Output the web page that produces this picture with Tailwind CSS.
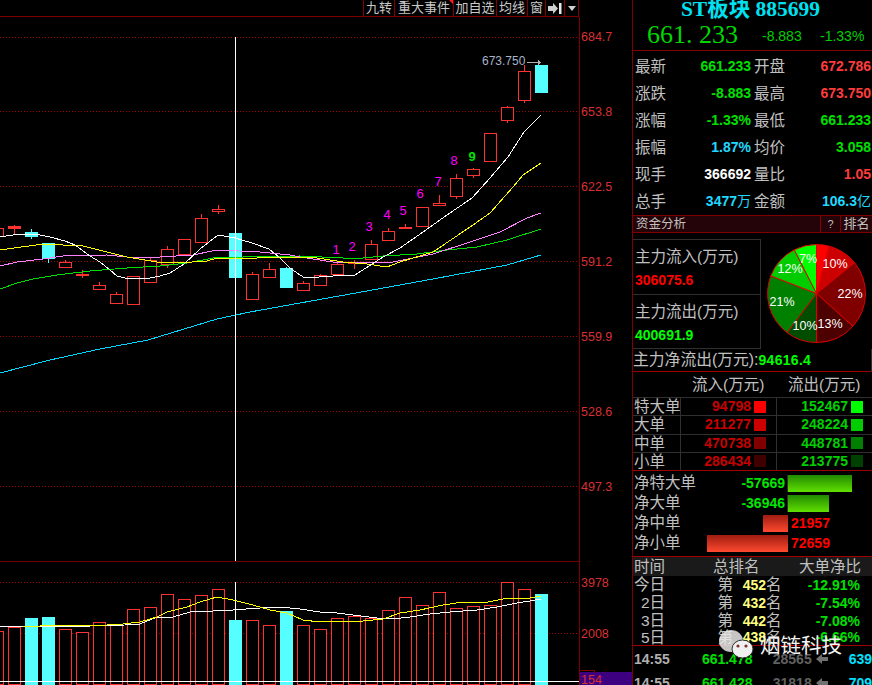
<!DOCTYPE html>
<html lang="zh">
<head>
  <meta charset="UTF-8">
  <title>ST板块 885699</title>
  <script src="https://cdn.jsdelivr.net/npm/@tailwindcss/browser@4"></script>
</head>
<body class="bg-black text-[#c0c0c0] w-[872px] h-[685px] overflow-hidden flex relative [font-family:'Liberation_Sans','Noto_Sans_CJK_SC',sans-serif]">

  <!-- chart column -->
  <div class="w-[632px] h-[685px] shrink-0 flex flex-col">
    <div class="h-[17px] w-[579px] flex justify-end border-b border-[#800000] text-[13px] leading-[16px] text-[#c8c8c8] shrink-0">
      <div class="w-[31px] text-center border-l border-[#800000]">九转</div>
      <div class="w-[59px] text-center border-l border-[#800000] relative">重大事件
        <div class="absolute right-0 top-0 w-0 h-0 border-l-[4px] border-l-transparent border-t-[4px] border-t-[#ff2020]"></div>
      </div>
      <div class="w-[43px] text-center border-l border-[#800000]">加自选</div>
      <div class="w-[31px] text-center border-l border-[#800000]">均线</div>
      <div class="w-[18px] text-center border-l border-[#800000]">窗</div>
      <div class="w-[19px] border-l border-[#800000] flex items-center justify-center">
        <svg width="14" height="11" viewBox="0 0 14 11"><path d="M0 3h5V0l5 5.5-5 5.5V8H0z" fill="#d0d0d0"/><path d="M11 0h2.5v11H11z" fill="#e8e8e8"/></svg>
      </div>
      <div class="w-[15px] border-x border-[#800000] flex items-center justify-center">
        <svg width="8" height="5" viewBox="0 0 8 5"><path d="M0 0h8L4 5z" fill="#d0d0d0"/></svg>
      </div>
    </div>
    <svg id="chart" width="632" height="668" viewBox="0 17 632 668" shape-rendering="crispEdges" class="block"></svg>
  </div>

  <!-- quote panel -->
  <div class="w-[240px] h-[685px] shrink-0 flex flex-col border-l border-[#800000] overflow-hidden font-bold text-[14px]">
    <div class="h-[19px] shrink-0 pr-[4px] text-center text-[21.5px] leading-[19px] text-[#00e0f0] [font-family:'Liberation_Serif','Noto_Sans_CJK_SC',serif]">ST板块 885699</div>
    <div class="h-[32px] flex items-center border-b border-[#800000] shrink-0">
      <div class="w-[129px] pl-[14px] pt-px text-[26px] leading-[32px] font-normal text-[#00d800] [font-family:'Liberation_Serif',serif]">661. 233</div>
      <div class="w-[58px] text-[14px] font-normal text-[#00d000] pt-1">-8.883</div>
      <div class="text-[14px] font-normal text-[#00d000] pt-1">-1.33%</div>
    </div>
    <div class="h-[164px] pt-[2px] grid grid-cols-[118px_120px] grid-rows-6 shrink-0">
      <div class="flex justify-between items-center pl-[2px]"><span class="font-normal text-[15.5px]">最新</span><span class="text-[#00e000]">661.233</span></div>
      <div class="flex justify-between items-center pl-[3px]"><span class="font-normal text-[15.5px]">开盘</span><span class="text-[#ff3c3c]">672.786</span></div>
      <div class="flex justify-between items-center pl-[2px]"><span class="font-normal text-[15.5px]">涨跌</span><span class="text-[#00e000]">-8.883</span></div>
      <div class="flex justify-between items-center pl-[3px]"><span class="font-normal text-[15.5px]">最高</span><span class="text-[#ff3c3c]">673.750</span></div>
      <div class="flex justify-between items-center pl-[2px]"><span class="font-normal text-[15.5px]">涨幅</span><span class="text-[#00e000]">-1.33%</span></div>
      <div class="flex justify-between items-center pl-[3px]"><span class="font-normal text-[15.5px]">最低</span><span class="text-[#00e000]">661.233</span></div>
      <div class="flex justify-between items-center pl-[2px]"><span class="font-normal text-[15.5px]">振幅</span><span class="text-[#20d8ff]">1.87%</span></div>
      <div class="flex justify-between items-center pl-[3px]"><span class="font-normal text-[15.5px]">均价</span><span class="text-[#00e000]">3.058</span></div>
      <div class="flex justify-between items-center pl-[2px]"><span class="font-normal text-[15.5px]">现手</span><span class="text-white">366692</span></div>
      <div class="flex justify-between items-center pl-[3px]"><span class="font-normal text-[15.5px]">量比</span><span class="text-[#ff3c3c]">1.05</span></div>
      <div class="flex justify-between items-center pl-[2px]"><span class="font-normal text-[15.5px]">总手</span><span class="text-[#20d8ff]">3477<span class="font-normal">万</span></span></div>
      <div class="flex justify-between items-center pl-[3px]"><span class="font-normal text-[15.5px]">金额</span><span class="text-[#20d8ff]">106.3<span class="font-normal">亿</span></span></div>
    </div>
    <div class="h-[18px] shrink-0 flex bg-[#240408] border-y border-[#800000] text-[12.5px] leading-[16px] font-normal">
      <div class="w-[187px] pl-[3px]">资金分析</div>
      <div class="w-[20px] text-center text-[11px] border-l border-[#800000]">?</div>
      <div class="flex-1 text-center text-[13px] border-l border-[#800000]">排名</div>
    </div>
    <div class="h-[6px] shrink-0"></div>

    <div class="h-[110px] shrink-0 flex">
      <div class="w-[128px] border-y border-r border-[#303030] flex flex-col">
        <div class="h-[55px] border-b border-[#303030] pl-[2px] pt-[6px]">
          <div class="text-[15.5px] leading-[22px] font-normal whitespace-nowrap">主力流入(万元)</div>
          <div class="text-[#ff0000] leading-[22px] mt-px">306075.6</div>
        </div>
        <div class="flex-1 pl-[2px] pt-[6px]">
          <div class="text-[15.5px] leading-[22px] font-normal whitespace-nowrap">主力流出(万元)</div>
          <div class="text-[#00ff00] leading-[22px] mt-px">400691.9</div>
        </div>
      </div>
      <div class="flex-1 relative">
        <svg id="pie" width="111" height="110" viewBox="761 239 111 110" class="block"></svg>
      </div>
    </div>

    <div class="h-[23px] shrink-0 flex items-center border-b border-[#a00000] border-r border-r-[#303030] whitespace-nowrap">
      <span class="text-[15.8px] font-normal">主力净流出(万元):</span><span class="text-[#00ff00] tracking-[0.3px]">94616.4</span>
    </div>

    <div class="h-[25px] shrink-0 flex items-center text-[15.5px] font-normal whitespace-nowrap">
      <span class="pl-[59px] w-[155px]">流入(万元)</span><span>流出(万元)</span>
    </div>

    <div class="h-[74px] shrink-0 grid grid-cols-[48px_96px_95px] grid-rows-4 border-b border-[#a00000]">
      <div class="text-[15.5px] leading-[17px] font-normal border-t border-r border-[#303030] pl-px whitespace-nowrap">特大单</div>
      <div class="flex items-center justify-end gap-[3px] pr-[10px] border-t border-r border-[#303030] text-[#c80000]">94798<div class="w-[12px] h-[12px] bg-[#ff0000]"></div></div>
      <div class="flex items-center justify-end gap-[3px] pr-[9px] border-t border-[#303030] text-[#00d000]">152467<div class="w-[12px] h-[12px] bg-[#00ff00]"></div></div>
      <div class="text-[15.5px] leading-[17px] font-normal border-t border-r border-[#303030] pl-px whitespace-nowrap">大单</div>
      <div class="flex items-center justify-end gap-[3px] pr-[10px] border-t border-r border-[#303030] text-[#c80000]">211277<div class="w-[12px] h-[12px] bg-[#cc0000]"></div></div>
      <div class="flex items-center justify-end gap-[3px] pr-[9px] border-t border-[#303030] text-[#00d000]">248224<div class="w-[12px] h-[12px] bg-[#00cc00]"></div></div>
      <div class="text-[15.5px] leading-[17px] font-normal border-t border-r border-[#303030] pl-px whitespace-nowrap">中单</div>
      <div class="flex items-center justify-end gap-[3px] pr-[10px] border-t border-r border-[#303030] text-[#c80000]">470738<div class="w-[12px] h-[12px] bg-[#800000]"></div></div>
      <div class="flex items-center justify-end gap-[3px] pr-[9px] border-t border-[#303030] text-[#00d000]">448781<div class="w-[12px] h-[12px] bg-[#008000]"></div></div>
      <div class="text-[15.5px] leading-[17px] font-normal border-t border-r border-[#303030] pl-px whitespace-nowrap">小单</div>
      <div class="flex items-center justify-end gap-[3px] pr-[10px] border-t border-r border-[#303030] text-[#c80000]">286434<div class="w-[12px] h-[12px] bg-[#400000]"></div></div>
      <div class="flex items-center justify-end gap-[3px] pr-[9px] border-t border-[#303030] text-[#00d000]">213775<div class="w-[12px] h-[12px] bg-[#004000]"></div></div>
    </div>

    <div class="h-[86px] shrink-0 flex flex-col pt-[2px] border-b border-[#a00000]">
      <div class="h-[20px] flex items-center">
        <span class="w-[92px] pl-px text-[15.5px] font-normal whitespace-nowrap">净特大单</span>
        <span class="w-[62px] text-right pr-[2px] text-[#00e800]">-57669</span>
        <div class="h-[17px] w-[65px] border-l border-[#303030] bg-gradient-to-b from-[#1f8a00] to-[#60e000]"></div>
      </div>
      <div class="h-[20px] flex items-center">
        <span class="w-[92px] pl-px text-[15.5px] font-normal whitespace-nowrap">净大单</span>
        <span class="w-[62px] text-right pr-[2px] text-[#00e800]">-36946</span>
        <div class="h-[17px] w-[42px] border-l border-[#303030] bg-gradient-to-b from-[#1f8a00] to-[#60e000]"></div>
      </div>
      <div class="h-[20px] flex items-center">
        <span class="w-[130px] pl-px text-[15.5px] font-normal whitespace-nowrap">净中单</span>
        <div class="h-[17px] w-[25px] bg-gradient-to-b from-[#a01c10] to-[#ff4a30] mr-[3px]"></div>
        <span class="text-[#ff0000]">21957</span>
      </div>
      <div class="h-[20px] flex items-center">
        <span class="w-[74px] pl-px text-[15.5px] font-normal whitespace-nowrap">净小单</span>
        <div class="h-[17px] w-[81px] bg-gradient-to-b from-[#a01c10] to-[#ff4a30] mr-[3px]"></div>
        <span class="text-[#ff0000]">72659</span>
      </div>
    </div>

    <div class="h-[19px] shrink-0 flex items-center bg-[#1a1a1a] text-[15.5px] font-normal whitespace-nowrap">
      <span class="w-[80px] pl-px">时间</span><span class="w-[86px]">总排名</span><span>大单净比</span>
    </div>
    <div class="h-[70px] shrink-0 flex flex-col border-b border-[#a00000] whitespace-nowrap">
      <div class="h-[18px] shrink-0 flex items-center"><span class="w-[32px] text-right font-normal text-[15.5px]">今日</span><span class="w-[68px] text-right font-normal text-[15.5px]">第</span><span class="w-[33px] text-right text-[#ffff80]">452</span><span class="w-[16px] font-normal text-[15.5px]">名</span><span class="w-[78px] text-right text-[#00e000]">-12.91%</span></div>
      <div class="h-[18px] shrink-0 flex items-center"><span class="w-[32px] text-right font-normal text-[15.5px]">2日</span><span class="w-[68px] text-right font-normal text-[15.5px]">第</span><span class="w-[33px] text-right text-[#ffff80]">432</span><span class="w-[16px] font-normal text-[15.5px]">名</span><span class="w-[78px] text-right text-[#00e000]">-7.54%</span></div>
      <div class="h-[18px] shrink-0 flex items-center"><span class="w-[32px] text-right font-normal text-[15.5px]">3日</span><span class="w-[68px] text-right font-normal text-[15.5px]">第</span><span class="w-[33px] text-right text-[#ffff80]">442</span><span class="w-[16px] font-normal text-[15.5px]">名</span><span class="w-[78px] text-right text-[#00e000]">-7.08%</span></div>
      <div class="h-[15px] shrink-0 flex items-center"><span class="w-[32px] text-right font-normal text-[15.5px]">5日</span><span class="w-[68px] text-right font-normal text-[15.5px]">第</span><span class="w-[33px] text-right text-[#ffff80]">438</span><span class="w-[16px] font-normal text-[15.5px]">名</span><span class="w-[78px] text-right text-[#00e000]">-6.66%</span></div>
    </div>

    <div class="h-[26px] shrink-0 flex items-center whitespace-nowrap">
      <span class="w-[69px] pl-px text-[#b0b0b0]">14:55</span><span class="w-[71px] text-[#00e000]">661.478</span><span class="w-[43px] text-[#606060]">28565</span>
      <svg width="12" height="10" viewBox="0 0 12 10" class="mr-[21px]"><path d="M0 5l6-5v3h6v4H6v3z" fill="#707070"/></svg>
      <span class="text-[#00e0ff]">639</span>
    </div>
    <div class="h-[22px] shrink-0 flex items-center whitespace-nowrap">
      <span class="w-[69px] pl-px text-[#b0b0b0]">14:55</span><span class="w-[71px] text-[#00e000]">661.428</span><span class="w-[43px] text-[#606060]">31818</span>
      <svg width="12" height="10" viewBox="0 0 12 10" class="mr-[21px]"><path d="M0 5l6-5v3h6v4H6v3z" fill="#707070"/></svg>
      <span class="text-[#00e0ff]">709</span>
    </div>
  </div>

  <!-- watermark -->
  <div class="absolute left-[718px] top-[628px] flex items-center gap-[6px]">
    <svg width="36" height="32" viewBox="0 0 36 32">
      <ellipse cx="13" cy="13" rx="12" ry="11" fill="#e8e8e8" fill-opacity="0.85"/>
      <ellipse cx="24.5" cy="21" rx="10.5" ry="9" fill="#f0f0f0" stroke="#333" stroke-width="1"/>
      <circle cx="20" cy="18" r="1.6" fill="#803030"/>
      <circle cx="28" cy="18" r="1.6" fill="#803030"/>
    </svg>
    <span class="text-[20.5px] leading-[24px] text-[#f4f4f4] mt-[4px] font-normal whitespace-nowrap">烟链科技</span>
  </div>

  <script>
    const chart = document.getElementById('chart');
    let out = '';
    const RED = '#ff3232', CY = '#55ffff';
    const line = (x1, y1, x2, y2, c, extra = '') => out += `<line x1="${x1}" y1="${y1}" x2="${x2}" y2="${y2}" stroke="${c}" ${extra}/>`;
    const poly = (pts, c) => out += `<polyline points="${pts}" fill="none" stroke="${c}" stroke-width="1"/>`;
    const text = (x, y, s, c, size, extra = '') => out += `<text x="${x}" y="${y}" fill="${c}" font-size="${size}" font-family="Liberation Sans" shape-rendering="auto" ${extra}>${s}</text>`;

    // grid
    [37.5, 111.5, 186.5, 261.5, 336.5, 411.5, 486.5].forEach(y => line(0, y, 579, y, '#a00000', 'stroke-dasharray="1 2"'));
    [582.5, 633.5].forEach(y => line(0, y, 579, y, '#a00000', 'stroke-dasharray="1 2"'));
    line(0, 561.5, 579, 561.5, '#700000');
    line(579.5, 17, 579.5, 685, '#800000');

    // candles: [body top, body bottom, wick top, wick bottom, kind]
    const candles = [
      [228, 236, 228, 236, 'r'], [226, 228, 225, 233, 'f'], [232, 236, 229, 238, 'c'], [243, 258, 243, 262, 'c'],
      [262, 267, 260, 267, 'r'], [274, 275, 270, 277, 'f'], [285, 289, 282, 289, 'r'], [294, 303, 292, 303, 'r'],
      [276, 304, 276, 304, 'r'], [260, 282, 258, 282, 'r'], [249, 264, 246, 267, 'r'], [239, 254, 239, 254, 'r'],
      [218, 242, 214, 242, 'r'], [209, 211, 205, 213, 'r'], [233, 277, 233, 277, 'c'], [274, 299, 272, 299, 'r'],
      [269, 277, 263, 277, 'r'], [268, 287, 267, 287, 'c'], [283, 290, 281, 290, 'r'], [275, 285, 274, 285, 'r'],
      [264, 274, 263, 274, 'r'], [262, 263, 260, 268, 'r'], [244, 259, 240, 259, 'r'], [231, 240, 228, 240, 'r'],
      [227, 228, 224, 228, 'f'], [207, 226, 207, 226, 'r'], [203, 205, 195, 205, 'r'], [178, 196, 174, 198, 'r'],
      [169, 175, 168, 177, 'r'], [133, 161, 133, 161, 'r'], [107, 120, 106, 122, 'r'], [71, 100, 65, 102, 'r'],
      [65, 92, 65, 92, 'c']
    ];
    candles.forEach((k, i) => {
      const c = -3 + 17 * i, [t, b, wt, wb, kind] = k;
      const col = kind === 'c' ? CY : RED;
      line(c + .5, wt, c + .5, wb + 1, col);
      if (kind === 'r') out += `<rect x="${c - 5.5}" y="${t + .5}" width="12" height="${b - t}" fill="#000" stroke="${RED}"/>`;
      else out += `<rect x="${c - 6}" y="${t}" width="13" height="${b - t + 1}" fill="${col}"/>`;
    });

    // moving averages
    poly('0,373 50,360 100,349 148,340 217,319 250,312 300,303 367,291 433,279 507,265 541,255', '#00d8ff');
    poly('0,289 17,283 33,279 57,275 90,271 127,268 160,266 187,263 213,258 243,257 300,256 343,258 363,258 383,256 417,254 447,250 477,247 507,240 541,229', '#00e000');
    poly('0,266 17,262 43,259 63,256 107,255 127,257 160,257 193,255 217,250 260,252 290,255 300,257 333,262 367,263 393,262 433,254 467,243 500,232 527,218 541,213', '#ff80ff');
    poly('0,250 43,244 83,246 127,257 157,262 177,263 207,261 217,258 257,258 267,257 300,257 317,258 343,262 367,264 387,267 400,262 433,252 473,225 490,213 513,187 523,175 541,163', '#ffff00');
    poly('0,237 13,235 31,234 40,235 50,237 65,241 75,245 90,256 100,262 110,270 117,276 125,278 150,278 160,276 170,273 184,264 200,249 218,235 235,238 252,243 269,249 280,258 290,268 300,275 305,278 333,276 355,275 383,257 400,248 423,232 447,215 472,198 490,178 508,157 524,132 541,115', '#ffffff');

    // cross hair
    line(235.5, 37, 235.5, 561, '#ffffff');
    line(235.5, 582, 235.5, 685, '#ffffff');

    // numbers on the candles
    [[336, 254, '1'], [352, 251, '2'], [369, 231, '3'], [387, 219, '4'], [403, 215, '5'], [420, 198, '6'], [438, 186, '7'], [454, 165, '8']]
      .forEach(n => text(n[0], n[1], n[2], '#ff00ff', 13, 'text-anchor="middle"'));
    text(472, 161, '9', '#00e000', 13, 'text-anchor="middle" font-weight="bold"');
    text(482, 65, '673.750', '#a8b4c8', 12);
    line(527, 62.5, 541, 62.5, '#b0b0b0');
    out += '<path d="M538 60l3 2.5-3 2.5z" fill="#b0b0b0"/>';

    // volume bars: top of each bar
    const vol = [[631,'r'],[627,'r'],[618,'c'],[617,'c'],[629,'r'],[632,'r'],[622,'r'],[624,'r'],[609,'r'],[607,'r'],[594,'r'],[599,'r'],[595,'r'],[589,'r'],[620,'c'],[620,'r'],[625,'r'],[611,'c'],[625,'r'],[629,'r'],[618,'r'],[616,'r'],[618,'r'],[610,'r'],[597,'r'],[605,'r'],[592,'r'],[608,'r'],[606,'r'],[605,'r'],[582,'r'],[589,'r'],[594,'c']];
    vol.forEach((v, i) => {
      const c = -3 + 17 * i;
      if (v[1] === 'r') out += `<rect x="${c - 5.5}" y="${v[0] + .5}" width="12" height="${684 - v[0]}" fill="#000" stroke="${RED}"/>`;
      else out += `<rect x="${c - 6}" y="${v[0]}" width="13" height="${685 - v[0]}" fill="${CY}"/>`;
    });
    poly('0,627 7,626 40,626 90,626 125,625 140,624 157,617 173,617 190,612 213,611 233,610 260,608 280,607 300,609 320,612 337,613 353,615 377,618 393,619 410,617 430,614 450,612 477,610 497,607 517,603 530,601 541,599', '#ffffff');
    poly('23,626 40,626 57,625 73,625 90,626 107,625 123,624 140,622 157,617 167,612 187,607 200,602 217,597 233,600 253,605 270,610 287,613 303,620 320,622 340,621 363,621 383,619 400,613 420,610 443,605 463,602 483,603 503,599 530,598 541,596', '#ffff00');
    line(0, 681.5, 579, 681.5, '#ffffff');

    // axis labels
    [[41, '684.7'], [116, '653.8'], [191, '622.5'], [266, '591.2'], [341, '559.9'], [416, '528.6'], [491, '497.3']]
      .forEach(l => text(581, l[0], l[1], '#d83030', 12.5));
    text(581, 587, '3978', '#d83030', 12.5);
    text(581, 638, '2008', '#d83030', 12.5);
    out += '<rect x="580" y="672" width="52" height="13" fill="#3c0080"/><path d="M580 670.5h14v2" fill="none" stroke="#800000"/>';
    text(581, 684, '154', '#d83030', 12.5);
    chart.innerHTML = out;

    // pie
    const cx = 816.5, cy = 293.5, r = 49;
    const stops = [[0, 15, '#ff0000'], [15, 51, '#cc0000'], [51, 132, '#800000'], [132, 180, '#4d0000'], [180, 217, '#004d00'], [217, 291, '#008000'], [291, 333, '#00cc00'], [333, 360, '#00ff00']];
    const pt = a => [cx + r * Math.sin(a * Math.PI / 180), cy - r * Math.cos(a * Math.PI / 180)].map(n => n.toFixed(1)).join(' ');
    let pie = '';
    stops.forEach(s => pie += `<path d="M${cx} ${cy}L${pt(s[0])}A${r} ${r} 0 ${s[1] - s[0] > 180 ? 1 : 0} 1 ${pt(s[1])}Z" fill="${s[2]}" stroke="#e00000" stroke-width="1"/>`);
    [[835, 268, '10%'], [850, 298, '22%'], [830, 328, '13%'], [805, 330, '10%'], [782, 306, '21%'], [790, 273, '12%'], [808, 263, '7%']]
      .forEach(l => pie += `<text x="${l[0]}" y="${l[1]}" fill="#fff" font-size="12.5" font-weight="400" text-anchor="middle" font-family="Liberation Sans">${l[2]}</text>`);
    document.getElementById('pie').innerHTML = pie;
  </script>
</body>
</html>
